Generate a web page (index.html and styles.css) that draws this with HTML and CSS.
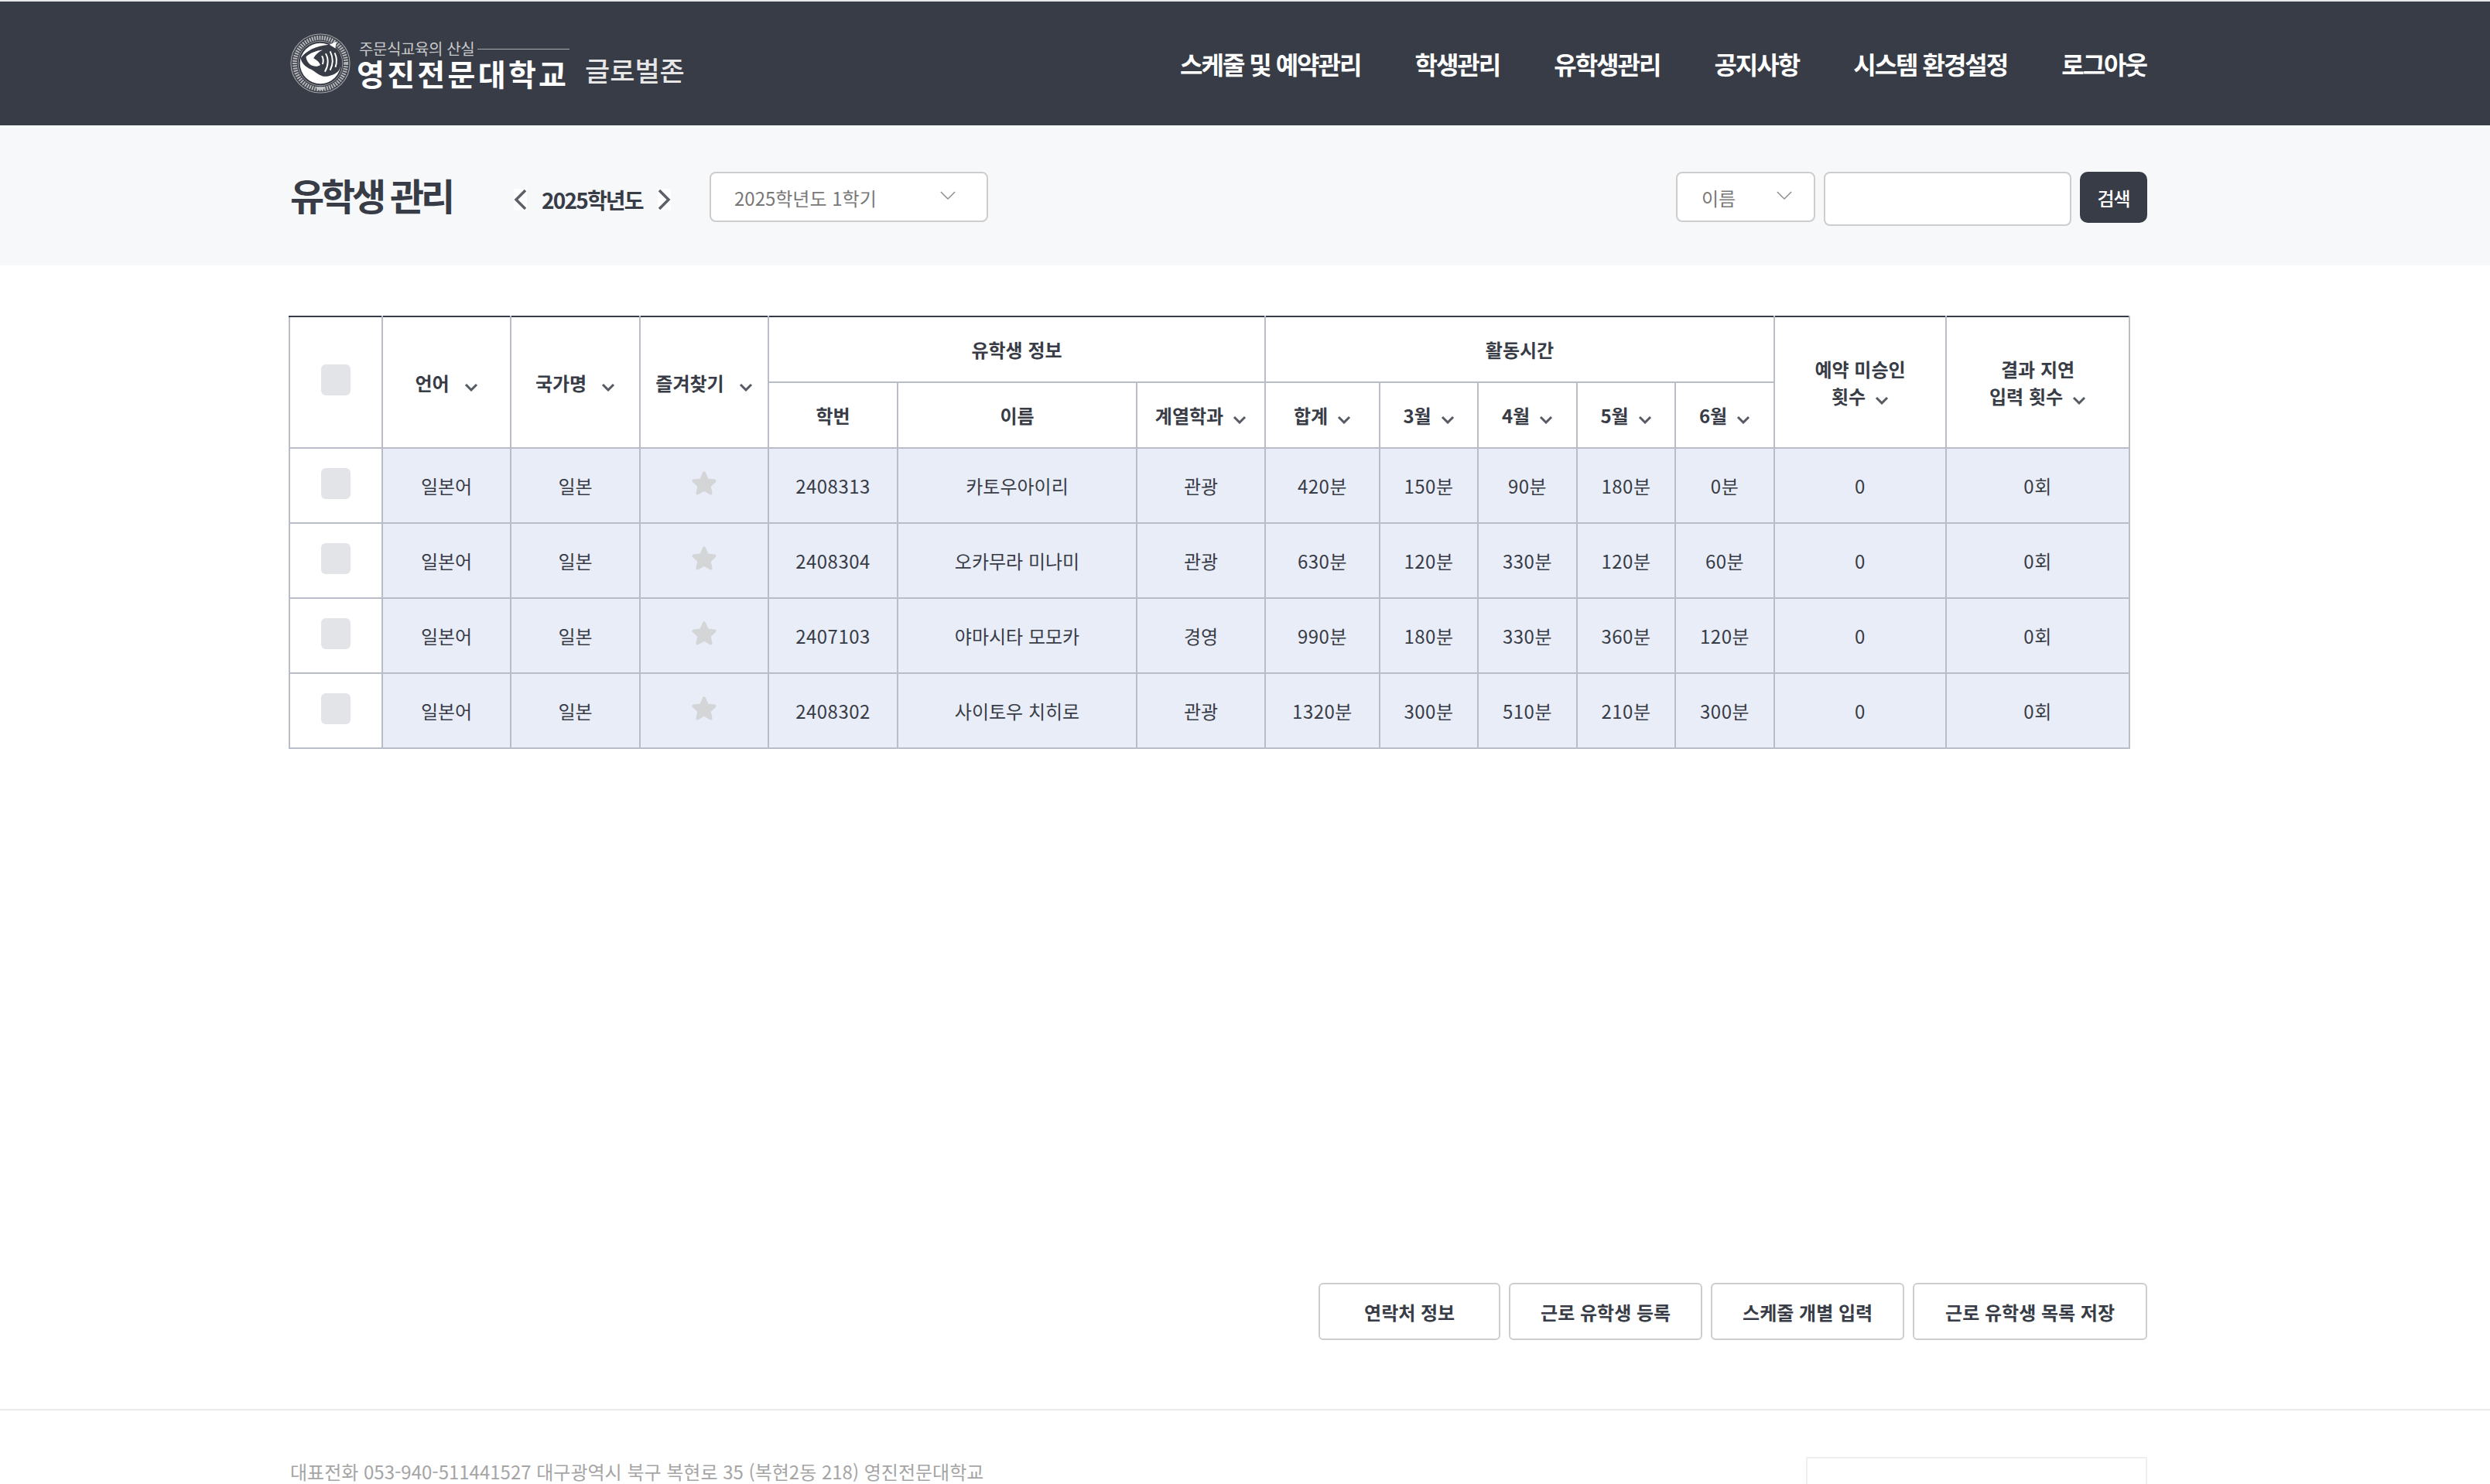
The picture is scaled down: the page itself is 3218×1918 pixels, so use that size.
FILE: index.html
```html
<!DOCTYPE html>
<html lang="ko">

<head>
    <meta charset="UTF-8">
    <title>유학생 관리</title>
    <link rel="stylesheet" href="styles.css">
</head>

<body>
    <svg class="defs" width="0" height="0">
        <symbol id="chev" viewBox="0 0 18 11">
            <path d="M2 2l7 7 7-7" fill="none" stroke="#555a63" stroke-width="3" />
        </symbol>
        <symbol id="star" viewBox="0 0 30 30">
            <path d="M15 3l3.6 8 8.4.9-6.2 5.8 1.8 8.3-7.6-4.4-7.6 4.4 1.8-8.3L3 11.900l8.400-.9z" fill="#d3d5d7" stroke="#d3d5d7" stroke-width="3.500" stroke-linejoin="round" />
        </symbol>
    </svg>

    <header class="topbar">
        <div class="inner topbar-row">
            <a class="logo">
                <svg class="emblem" viewBox="0 0 80 80">
                    <circle cx="40" cy="40" r="39" fill="none" stroke="#a4a5a8" stroke-width="1.200" />
                    <circle cx="40" cy="40" r="34" fill="none" stroke="#b4b5b8" stroke-width="6" stroke-dasharray="2 1.300" />
                    <circle cx="40" cy="40" r="29.500" fill="none" stroke="#9a9b9f" stroke-width="1" />
                    <circle cx="40" cy="40" r="27" fill="#fff" />
                    <path d="M14 33C20 24 34 16 52 15c7 1 13 7 15 16 2 8 0 14-3 19-6 6-15 8-21 7-6-2-10-6-15-9-7-3-13-8-14-15z" fill="#383c46" />
                    <path d="M21 31c6-5 13-8 22-9-6 3-10 7-12 11 3 2 7 4 9 9-4 3-10 2-14-1-3-3-5-7-5-10z" fill="#fff" />
                    <path d="M47 27c4 6 4 16-1 24M53 24c4 8 4 17 0 25M59 26c3 6 3 13 1 19M42 30c2 3 2 8 1 11" fill="none" stroke="#fff" stroke-width="2" />
                    <path d="M52 15l9-4-1 9z" fill="#fff" />
                    <path d="M34 71l12 0-2 4-8 0z" fill="#c4c5c7" />
                </svg>
                <span class="logo-text">
                    <span class="logo-slogan">주문식교육의 산실</span>
                    <span class="logo-name">영진전문대학교</span>
                </span>
                <span class="logo-zone">글로벌존</span>
            </a>
            <nav class="gnb">
                <a>스케줄 및 예약관리</a>
                <a>학생관리</a>
                <a>유학생관리</a>
                <a>공지사항</a>
                <a>시스템 환경설정</a>
                <a>로그아웃</a>
            </nav>
        </div>
    </header>

    <section class="subbar">
        <div class="inner subbar-row">
            <h1>유학생 관리</h1>
            <div class="year-nav">
                <svg class="year-arrow" viewBox="0 0 17 28"><path d="M15 2L3 14l12 12" /></svg>
                <span>2025학년도</span>
                <svg class="year-arrow" viewBox="0 0 17 28"><path d="M2 2l12 12L2 26" /></svg>
            </div>
            <div class="select select-term">
                <span>2025학년도 1학기</span>
                <svg class="select-chev" viewBox="0 0 22 13"><path d="M1 1l10 10L21 1" /></svg>
            </div>
            <form class="search">
                <div class="select select-key">
                    <span>이름</span>
                    <svg class="select-chev" viewBox="0 0 22 13"><path d="M1 1l10 10L21 1" /></svg>
                </div>
                <input class="search-input" type="text">
                <button class="search-btn" type="button">검색</button>
            </form>
        </div>
    </section>

    <main class="inner">
        <table class="students">
            <colgroup>
                <col class="c-check">
                <col class="c-mid">
                <col class="c-wide">
                <col class="c-mid">
                <col class="c-wide">
                <col class="c-name">
                <col class="c-mid">
                <col class="c-total">
                <col class="c-month">
                <col class="c-month2">
                <col class="c-month">
                <col class="c-month2">
                <col class="c-count">
                <col class="c-late">
            </colgroup>
            <thead>
                <tr>
                    <th rowspan="2"><span class="check"></span></th>
                    <th rowspan="2">언어<svg class="sort sort-far"><use href="#chev" /></svg></th>
                    <th rowspan="2">국가명<svg class="sort sort-far"><use href="#chev" /></svg></th>
                    <th rowspan="2">즐겨찾기<svg class="sort sort-far"><use href="#chev" /></svg></th>
                    <th colspan="3">유학생 정보</th>
                    <th colspan="5">활동시간</th>
                    <th rowspan="2">예약 미승인<br>횟수<svg class="sort"><use href="#chev" /></svg></th>
                    <th rowspan="2">결과 지연<br>입력 횟수<svg class="sort"><use href="#chev" /></svg></th>
                </tr>
                <tr>
                    <th>학번</th>
                    <th>이름</th>
                    <th>계열학과<svg class="sort"><use href="#chev" /></svg></th>
                    <th>합계<svg class="sort"><use href="#chev" /></svg></th>
                    <th>3월<svg class="sort"><use href="#chev" /></svg></th>
                    <th>4월<svg class="sort"><use href="#chev" /></svg></th>
                    <th>5월<svg class="sort"><use href="#chev" /></svg></th>
                    <th>6월<svg class="sort"><use href="#chev" /></svg></th>
                </tr>
            </thead>
            <tbody>
                <tr>
                    <td class="cell-check"><span class="check"></span></td>
                    <td>일본어</td>
                    <td>일본</td>
                    <td><svg class="fav"><use href="#star" /></svg></td>
                    <td>2408313</td>
                    <td>카토우아이리</td>
                    <td>관광</td>
                    <td>420분</td>
                    <td>150분</td>
                    <td>90분</td>
                    <td>180분</td>
                    <td>0분</td>
                    <td>0</td>
                    <td>0회</td>
                </tr>
                <tr>
                    <td class="cell-check"><span class="check"></span></td>
                    <td>일본어</td>
                    <td>일본</td>
                    <td><svg class="fav"><use href="#star" /></svg></td>
                    <td>2408304</td>
                    <td>오카무라 미나미</td>
                    <td>관광</td>
                    <td>630분</td>
                    <td>120분</td>
                    <td>330분</td>
                    <td>120분</td>
                    <td>60분</td>
                    <td>0</td>
                    <td>0회</td>
                </tr>
                <tr>
                    <td class="cell-check"><span class="check"></span></td>
                    <td>일본어</td>
                    <td>일본</td>
                    <td><svg class="fav"><use href="#star" /></svg></td>
                    <td>2407103</td>
                    <td>야마시타 모모카</td>
                    <td>경영</td>
                    <td>990분</td>
                    <td>180분</td>
                    <td>330분</td>
                    <td>360분</td>
                    <td>120분</td>
                    <td>0</td>
                    <td>0회</td>
                </tr>
                <tr>
                    <td class="cell-check"><span class="check"></span></td>
                    <td>일본어</td>
                    <td>일본</td>
                    <td><svg class="fav"><use href="#star" /></svg></td>
                    <td>2408302</td>
                    <td>사이토우 치히로</td>
                    <td>관광</td>
                    <td>1320분</td>
                    <td>300분</td>
                    <td>510분</td>
                    <td>210분</td>
                    <td>300분</td>
                    <td>0</td>
                    <td>0회</td>
                </tr>
            </tbody>
        </table>

        <div class="actions">
            <button class="btn btn-contact" type="button">연락처 정보</button>
            <button class="btn" type="button">근로 유학생 등록</button>
            <button class="btn" type="button">스케줄 개별 입력</button>
            <button class="btn btn-save" type="button">근로 유학생 목록 저장</button>
        </div>
    </main>

    <footer class="footer">
        <div class="inner footer-row">
            <p>대표전화 053-940-511441527 대구광역시 북구 복현로 35 (복현2동 218) 영진전문대학교</p>
            <div class="footer-box"></div>
        </div>
    </footer>
</body>

</html>
```

FILE: styles.css
```css
* {
    box-sizing: border-box;
}

html,
body {
    height: 1918px;
    overflow: hidden;
}

body {
    margin: 0;
    background-color: #fff;
    color: #383c46;
    font-family: "Noto Sans CJK KR", "Noto Sans", sans-serif;
    font-size: 24px;
}

button,
input {
    font-family: inherit;
}

h1,
p {
    margin: 0;
}

.defs {
    position: absolute;
}

.inner {
    width: 2400px;
    margin-left: 375px;
}

/* top bar */
.topbar {
    height: 162px;
    border-top: 2px solid #e6e7e8;
    background-color: #383c46;
}

.topbar-row {
    display: flex;
    align-items: center;
    justify-content: space-between;
    height: 160px;
}

.logo {
    display: flex;
    align-items: flex-start;
    color: #fff;
}

.emblem {
    width: 78px;
    height: 78px;
}

.logo-text {
    display: flex;
    flex-direction: column;
    margin-left: 8px;
    width: 275px;
}

.logo-slogan {
    display: flex;
    align-items: center;
    gap: 4px;
    height: 24px;
    margin: 8px 0 0 3px;
    color: #c9cacc;
    font-size: 20px;
    letter-spacing: -0.4px;
    line-height: 24px;
}

.logo-slogan::after {
    content: "";
    flex: 1;
    height: 1px;
    background-color: #a9abae;
}

.logo-name {
    height: 42px;
    font-size: 39px;
    font-weight: 700;
    letter-spacing: 3.3px;
    line-height: 38px;
    white-space: nowrap;
}

.logo-zone {
    height: 46px;
    margin: 26px 0 0 20px;
    color: #e6e6e7;
    font-size: 35px;
    font-weight: 500;
    line-height: 42px;
    white-space: nowrap;
}

.gnb {
    display: flex;
    gap: 70px;
    margin-right: 1px;
}

.gnb a {
    color: #fff;
    font-size: 32px;
    font-weight: 700;
    letter-spacing: -2px;
    white-space: nowrap;
}

/* title and filters */
.subbar {
    height: 181px;
    background-color: #f7f8fa;
}

.subbar-row {
    display: flex;
    align-items: flex-start;
    padding-top: 60px;
}

.subbar h1 {
    width: 289px;
    font-size: 48px;
    font-weight: 700;
    letter-spacing: -4.2px;
    line-height: 58px;
}

.year-nav {
    display: flex;
    align-items: center;
    gap: 19px;
    width: 253px;
    height: 72px;
    font-size: 28px;
    font-weight: 700;
    letter-spacing: -1.8px;
}

.year-arrow {
    width: 17px;
    height: 28px;
    background-color: #fff;
}

.year-arrow path {
    fill: none;
    stroke: #5c6068;
    stroke-width: 3.500;
}

.select {
    display: flex;
    align-items: center;
    justify-content: space-between;
    height: 65px;
    padding-top: 2px;
    border: 2px solid #cdcdcd;
    border-radius: 8px;
    background-color: #fff;
    color: #787878;
    font-size: 24px;
}

.select-term {
    width: 360px;
    padding-left: 30px;
    padding-right: 40px;
}

.select-key {
    width: 180px;
    padding-left: 31px;
    padding-right: 28px;
}

.select-chev {
    width: 20px;
    height: 12px;
    margin-top: -6px;
}

.select-chev path {
    fill: none;
    stroke: #8c8c8c;
    stroke-width: 1.600;
}

.search {
    display: flex;
    align-items: flex-start;
    gap: 11px;
    margin-left: auto;
}

.search-input {
    width: 320px;
    height: 70px;
    border: 2px solid #cdcdcd;
    border-radius: 8px;
    background-color: #fff;
}

.search-btn {
    width: 87px;
    height: 66px;
    border: 0;
    border-radius: 10px;
    background-color: #383c46;
    color: #fff;
    font-size: 24px;
    font-weight: 500;
    letter-spacing: -1px;
}

/* table */
.students {
    width: 2378px;
    margin: 65px 0 0 -2px;
    border-collapse: collapse;
    table-layout: fixed;
}

.c-check {
    width: 120px;
}

.c-mid {
    width: 166px;
}

.c-wide {
    width: 167px;
}

.c-name {
    width: 309px;
}

.c-total {
    width: 148px;
}

.c-month {
    width: 127px;
}

.c-month2 {
    width: 128px;
}

.c-count {
    width: 222px;
}

.c-late {
    width: 237px;
}

.students th,
.students td {
    border: 2px solid #b9bdc7;
    padding: 0;
    text-align: center;
    font-size: 24px;
}

.students th {
    height: 85px;
    font-weight: 700;
    line-height: 35px;
}

.students thead tr:first-child th {
    border-top-color: #383c46;
}

.students td {
    height: 97px;
    background-color: #e9edf8;
}

.students td:nth-child(5),
.students td:nth-child(n+8) {
    letter-spacing: 0.5px;
}

.students .cell-check {
    background-color: #fff;
}

.check {
    display: inline-block;
    width: 38px;
    height: 40px;
    margin-bottom: 6px;
    border-radius: 6px;
    background-color: #e2e4e8;
    vertical-align: middle;
}

.sort {
    width: 18px;
    height: 11px;
    margin-left: 12px;
    vertical-align: -1px;
}

.sort-far {
    margin-left: 19px;
}

.fav {
    width: 34px;
    height: 34px;
    margin-bottom: 6px;
    vertical-align: middle;
}

/* bottom buttons */
.actions {
    display: flex;
    justify-content: flex-end;
    gap: 11px;
    margin-top: 690px;
}

.btn {
    height: 74px;
    padding: 0 39px;
    border: 2px solid #cdcdcd;
    border-radius: 6px;
    background-color: #fff;
    color: #383c46;
    font-size: 24px;
    font-weight: 700;
}

.btn-contact {
    width: 235px;
}

.btn-save {
    padding: 0 40px;
}

/* footer */
.footer {
    margin-top: 89px;
    border-top: 2px solid #ebebeb;
}

.footer-row {
    display: flex;
    justify-content: space-between;
    padding-top: 60px;
}

.footer-row p {
    margin-top: 1px;
    color: #a5a5a5;
    font-size: 24px;
    line-height: 36px;
}

.footer-box {
    width: 441px;
    height: 80px;
    border: 2px solid #efefef;
}
```
